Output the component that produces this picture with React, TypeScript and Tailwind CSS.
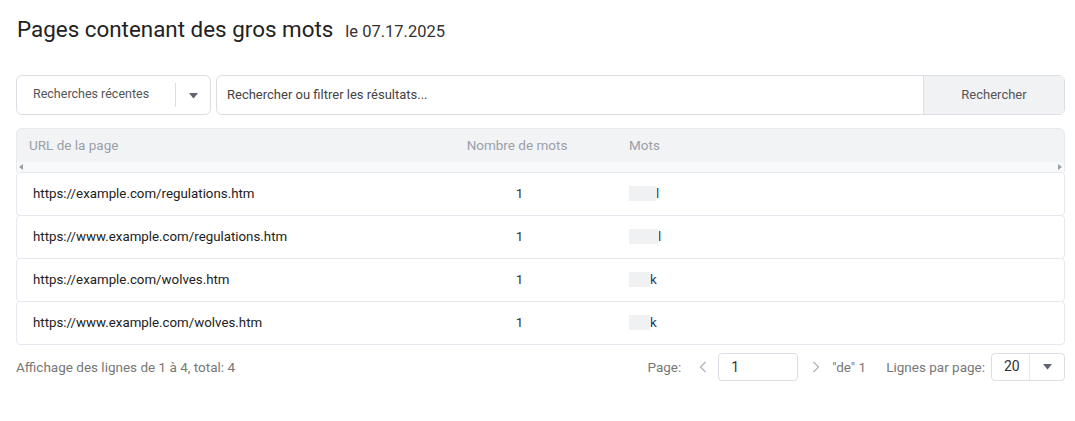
import { useState } from 'react';

const rows = [
    { url: 'https://example.com/regulations.htm', count: 1, word: 'l', mask: 'w-[27px]' },
    { url: 'https://www.example.com/regulations.htm', count: 1, word: 'l', mask: 'w-[29px]' },
    { url: 'https://example.com/wolves.htm', count: 1, word: 'k', mask: 'w-[21px]' },
    { url: 'https://www.example.com/wolves.htm', count: 1, word: 'k', mask: 'w-[21px]' },
];

function Caret({ className = '' }: { className?: string }) {
    return (
        <svg width="9" height="6" viewBox="0 0 9 6" className={className}>
            <path d="M0 0 L9 0 L4.5 5.5 Z" fill="#5f6470" />
        </svg>
    );
}

function Chevron({ dir }: { dir: 'left' | 'right' }) {
    return (
        <svg width="8" height="12" viewBox="0 0 8 12">
            <path
                d={dir === 'left' ? 'M6.5 1 L1.5 6 L6.5 11' : 'M1.5 1 L6.5 6 L1.5 11'}
                fill="none"
                stroke="#b4b7bd"
                strokeWidth="1.4"
            />
        </svg>
    );
}

export default function App() {
    const [query, setQuery] = useState('');
    const [page, setPage] = useState('1');

    return (
        <div className="min-h-[421px] w-[1075px] bg-white pl-4 pr-[10px] pt-[14px] font-['Roboto',sans-serif] text-[#222]">
            <div className="flex items-baseline gap-[12px] pl-[1px]">
                <h1 className="text-[22.4px] font-normal leading-[30px] text-[#222]">Pages contenant des gros mots</h1>
                <span className="text-[16.5px] text-[#333]">le 07.17.2025</span>
            </div>

            <div className="mt-[30px] flex h-10 gap-[5px]">
                <div className="flex w-[195px] items-center rounded-[6px] border border-[#dcdee5] bg-white">
                    <span className="flex-1 pl-[16px] text-[12.5px] text-[#555]">Recherches récentes</span>
                    <span className="h-[24px] w-px bg-[#dcdee5]" />
                    <span className="flex w-[34px] justify-center pt-[2px]">
                        <Caret />
                    </span>
                </div>
                <div className="flex flex-1 overflow-hidden rounded-[6px] border border-[#dcdee5]">
                    <input
                        value={query}
                        onChange={(e) => setQuery(e.target.value)}
                        placeholder="Rechercher ou filtrer les résultats..."
                        className="flex-1 px-[10px] text-[13px] text-[#333] outline-none placeholder:text-[#444]"
                    />
                    <button className="w-[141px] border-l border-[#dcdee5] bg-[#f1f2f4] text-[13px] text-[#555]">
                        Rechercher
                    </button>
                </div>
            </div>

            <div className="mt-[13px] rounded-t-[6px] border border-b-0 border-[#e8eaef] bg-[#f2f3f5]">
                <div className="flex h-[33px] items-center text-[13.5px] text-[#9a9fa9]">
                    <div className="w-[400px] pl-[12px]">URL de la page</div>
                    <div className="w-[200px] text-center">Nombre de mots</div>
                    <div className="pl-[12px]">Mots</div>
                </div>
                <div className="flex h-[10px] items-center justify-between bg-[#f8f9fa] px-[2px]">
                    <svg width="4" height="6" viewBox="0 0 4 6"><path d="M4 0 L0 3 L4 6 Z" fill="#9a9ea6" /></svg>
                    <svg width="4" height="6" viewBox="0 0 4 6"><path d="M0 0 L4 3 L0 6 Z" fill="#9a9ea6" /></svg>
                </div>
            </div>

            <div className="flex flex-col">
                {rows.map((row) => (
                    <div
                        key={row.url}
                        className="-mt-px flex h-[44px] items-center rounded-[4px] border border-[#e6e8ef] bg-white text-[13.3px] first:mt-0"
                    >
                        <div className="w-[400px] pl-[16px] text-[#222]">{row.url}</div>
                        <div className="w-[205px] text-center text-[#333]">{row.count}</div>
                        <div className="flex items-center pl-[7px]">
                            <span className={`h-[15px] bg-[#f0f1f3] ${row.mask}`} />
                            <span className="text-[#1d3b6f]">{row.word}</span>
                        </div>
                    </div>
                ))}
            </div>

            <div className="mt-[8px] flex items-center justify-between text-[13.5px] text-[#777]">
                <span>Affichage des lignes de 1 à 4, total: 4</span>
                <div className="flex items-center">
                    <span>Page:</span>
                    <span className="ml-[18px] flex items-center">
                        <Chevron dir="left" />
                    </span>
                    <input
                        value={page}
                        onChange={(e) => setPage(e.target.value)}
                        className="ml-[11px] h-[28px] w-[80px] rounded-[4px] border border-[#dcdee5] px-[12px] text-[14px] text-[#333] outline-none"
                    />
                    <span className="ml-[14px] flex items-center">
                        <Chevron dir="right" />
                    </span>
                    <span className="ml-[12px]">"de" 1</span>
                    <span className="ml-[20px]">Lignes par page:</span>
                    <div className="ml-[6px] flex h-[28px] w-[74px] items-center rounded-[4px] border border-[#dcdee5]">
                        <span className="w-[37px] pl-[12px] text-[14px] text-[#333]">20</span>
                        <span className="h-[27px] w-px bg-[#e6e8ef]" />
                        <span className="flex flex-1 justify-center">
                            <Caret />
                        </span>
                    </div>
                </div>
            </div>
        </div>
    );
}
